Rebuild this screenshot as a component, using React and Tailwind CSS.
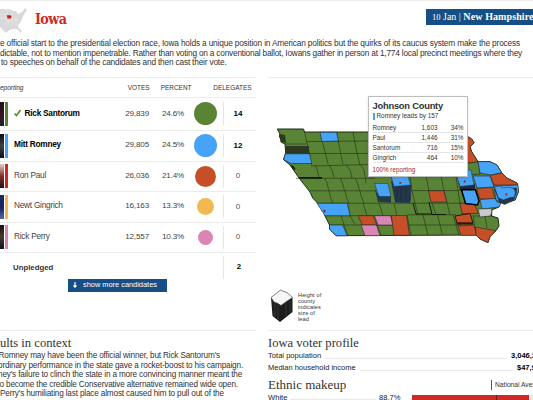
const G = '#5a8435';
const B = '#47a3f8';
const O = '#c64f28';
const P = '#da86b4';
const D = '#24384c';

const candidates = [
  { name: 'Rick Santorum', votes: '29,839', pct: '24.6%', del: '14', won: true, bold: true, h: 'h-[32.5px]', photo: 'from-[#15131c] via-[#3a1420] to-[#16203c]', bar: 'bg-[#5a8435]', dot: 'size-[23px] bg-[#5a8435]' },
  { name: 'Mitt Romney', votes: '29,805', pct: '24.5%', del: '12', bold: true, h: 'h-[31px]', photo: 'from-[#0b0d0f] via-[#3c4444] to-[#0c1014]', bar: 'bg-[#47a3f8]', dot: 'size-[23px] bg-[#47a3f8]' },
  { name: 'Ron Paul', votes: '26,036', pct: '21.4%', del: '0', h: 'h-[30px]', photo: 'from-[#d9d2c0] via-[#8a2a28] to-[#1c1415]', bar: 'bg-[#d42424]', dot: 'size-[21px] bg-[#c64f28]' },
  { name: 'Newt Gingrich', votes: '16,163', pct: '13.3%', del: '0', h: 'h-[31px]', photo: 'from-[#1c2a66] via-[#18235a] to-[#5a6aa0]', bar: 'bg-[#f0b952]', dot: 'size-[17px] bg-[#f0b952]' },
  { name: 'Rick Perry', votes: '12,557', pct: '10.3%', del: '0', h: 'h-[30px]', photo: 'from-[#14110f] via-[#4b3a2c] to-[#10131f]', bar: 'bg-[#da86b4]', dot: 'size-[15px] bg-[#da86b4]' },
];

function CandidateRow({ c }) {
  return (
    <div className={`flex items-center border-b border-[#ececec] ${c.h}`}>
      <div className={`h-[24px] w-[4px] bg-gradient-to-b ${c.photo}`} />
      <div className={`ml-px h-[24px] w-[3px] ${c.bar}`} />
      <div className={`-mt-[2px] ml-[6px] flex w-[96px] items-center whitespace-nowrap text-[8.3px] tracking-[-0.26px] ${c.bold ? 'font-bold text-black' : 'text-[#444]'}`}>
        {c.won && (
          <svg className="mr-[3px] h-[8px] w-[7.5px] shrink-0" viewBox="0 0 15 16">
            <path d="M1 9l4 4L13 2" fill="none" stroke="#4f8a2a" strokeWidth="3" />
          </svg>
        )}
        {c.name}
      </div>
      <div className="w-[39px] text-right text-[8.1px] tracking-[-0.15px] text-[#444]">{c.votes}</div>
      <div className="w-[35px] text-right text-[8.1px] tracking-[-0.2px] text-[#444]">{c.pct}</div>
      <div className="ml-[4px] flex w-[35px] justify-center">
        <div className={`rounded-full ${c.dot}`} />
      </div>
      <div className={`flex h-[23px] w-[29px] items-center justify-center border-l border-[#e6e6e6] text-[8px] ${c.bold ? 'font-bold text-black' : 'text-[#555]'}`}>{c.del}</div>
    </div>
  );
}

const outline =
  '277.3,129 303.5,129 304.5,132 466,132 467.7,136.7 471.7,139 474,142.7 470,147 471.7,151.7 478,161.7 490,161.7 497,165 501.7,172.7 506.7,178 517,183 518.5,191.5 515,200 500,203 499,207 491.7,210 491.7,216 498,218 499,226 496,230.7 490,236.5 488,242.5 480,239 476,235 336,235.7 329.5,229 329.5,225 325,216 322.7,210 317.5,203 312.7,198 310,192 305,185.7 299,178 293.5,170 290,165 283.5,159.5 285.7,152.7 285,144 281,142 280,134';

const areas = [
  [B, '320,132.3 336.5,132.3 338.5,141 322,141.5'],
  [B, '285.5,153.8 309.5,153.8 311.8,163.5 291,163.5 283.5,159.5'],
  [B, '317,203.3 347.3,203.3 350,215.7 325,215.7'],
  [B, '329.5,225 342.5,225 347.3,235.7 336,235.7 329.5,229'],
  [O, '358,215.7 373,215.7 377,225 362.5,225'],
  [P, '374.5,215.7 390.5,215.7 393,225 378,225'],
  [P, '361,225 376.5,225 380,235.7 365,235.7'],
  [O, '391.3,215.5 406.5,215.5 409.5,235.3 394,235.3'],
  [O, '452,132 466,132 467.7,136.7 471.7,139 474,142.7 470,147 471.7,151.7 478,161.7 461,164'],
  [G, '461,164 478,162 480,174 466,175'],
  [B, '478,161.7 490,161.7 497,165 501.7,172.7 491,175 480,173'],
  [O, '490,175.5 502,173 507,178 517,183 518,185 494,185'],
  [B, '473,176 490,176 494,187 477,188'],
  [B, '494,186 518,185 518.5,191.5 515,200 503,203 496,200'],
  [O, '428.5,190.7 443.5,190.7 447,202 431,202'],
  [O, '476.5,188.5 492,187.5 495,199 480,199'],
  [B, '480,199.5 495,198.5 497,202 501,203 499,207 482,209'],
  [O, '460,203.3 474,203.3 478.5,213.5 462,213.5'],
  ['#c9c9c9', '478,209 491.7,208.5 491.7,213 490,216 480,217'],
  [O, '458,226 474,225 476.5,235.3 461,235.3'],
  [O, '475.5,227 496,230.7 490,236.5 488,242.5 480,239 476,235'],
];

const lines = [
  'M285.5 144H306M306.5 141.5L370 141M307.5 153.5H370M311 166L370 164.5M296 178.3H375M310 190.8H376M317 203.2H462M325 215.7H392M329 225H461M410 190.6H462M407 214.8H456M474 216H492',
  'M304.5 132L309.5 153.5L311.5 165M336.5 132l4 20.5 2.5 12M353 132l4 21 3 12M322 141.5l3.500 12 2.500 10.500',
  'M315 165l2 4 2 9M329 165l3 5 2 8M346 165l4 5 2 8M361 165l3 5 2 13',
  'M325 178.300l2 5 2 7.500M340.500 178.300l2 5 2 7.500M355.500 178.300l2 5 2 7.500',
  'M329 190.800l1 5 3 7.500M345 190.800l1 5 3 7.500M360 190.800l1 5 3 7.500M347.500 203.200l2.500 12.500 5 9M363 203.200l4 12.500M379 203.200l4 12.500M394 203.200l3 12.500M341 215.700l3 9.300 4 10.700M377 225l4 10.700',
  'M410 176l2 15 3 12 3 12M426 176l3 15 3 12 4 12M441 176l3 15 3 12 3 12M456 176l2 15 2 12 3 12M407 215l4 20M423 215l5 20M437.500 215l5 20M453 215l6 20M473 215l3 20M485 216l2 12',
];

function IowaMap() {
  return (
    <svg className="block h-[206px] w-[265px]" viewBox="268 78 265 206">
      <polygon points={outline} fill={G} stroke="#1e2a18" strokeWidth="1" />
      {lines.map((d, i) => (
        <path key={i} d={d} fill="none" stroke="#203014" strokeWidth="0.6" />
      ))}
      {areas.map(([fill, pts], i) => (
        <polygon key={i} points={pts} fill={fill} stroke="#1e2a28" strokeWidth="0.6" />
      ))}
      {/* Raised counties: dark side walls below the coloured tops */}
      <path d="M285.500 146H309V153.700H285.700ZM279 134l6 1 1 8-4-1-3-5Z" fill="#2c3820" />
      <path d="M290 165l3.500 1 2 3-1 1ZM299 177H322V178.800H300Z" fill="#121a0c" />
      <path d="M374.500 188l3.500 14 13 .8V196l-13-1Z" fill={D} />
      <path d="M374.500 183.500H388L391 196.500H379Z" fill={B} stroke="#1e2a38" strokeWidth="0.500" />
      <path d="M391 181l4 21.500 15 .5 1-4V184Z" fill={D} />
      <path d="M391 176H408L410.500 185 394 186.500Z" fill={B} stroke="#1e2a38" strokeWidth="0.500" />
      <path d="M397 188v14M401 188v15M406 187v15" stroke="#14212f" strokeWidth="0.500" />
      <path d="M458 181l2 9 15-1V184Z" fill="#1d2b38" />
      <path d="M457 176L463 170H471L474 185 460 186.500Z" fill={B} stroke="#1e2a38" strokeWidth="0.500" />
      <path d="M494.500 189l5 13 5 2.500 9-4 3-8V188Z" fill={D} stroke="#14202c" strokeWidth="0.500" />
      <path d="M494.500 187l5-1 4 2 5-1 5 1.500 2 3.500-1 5-6 1-5 2-5-2Z" fill={B} stroke="#1e2a38" strokeWidth="0.500" />
      <path d="M461.500 189.800H475.500L479 201l-1.500 4-12-1.500Z" fill={B} stroke="#000" strokeWidth="1.500" />
      <path d="M455 216l15-2.500 3 9.500H457Z" fill={O} stroke="#19110c" strokeWidth="0.900" />
      <path d="M456.500 223.600H473" stroke="#3c150a" strokeWidth="2" />
      <path d="M413 203l3 11h16M429 202l3 12.500H446" fill="none" stroke="#10180a" strokeWidth="1" />
      <circle cx="324.500" cy="211" r="1.200" fill="#9b1c24" />
      <circle cx="400.300" cy="183" r="1.100" fill="#9b1c24" />
      <circle cx="464.700" cy="181.500" r="1.100" fill="#9b1c24" />
      <circle cx="506.300" cy="194.500" r="1.100" fill="#9b1c24" />
    </svg>
  );
}

const county = [
  ['Romney', '1,603', '34%'],
  ['Paul', '1,446', '31%'],
  ['Santorum', '716', '15%'],
  ['Gingrich', '464', '10%'],
];

function Tooltip() {
  return (
    <div className="absolute left-[100px] top-[18px] h-[81px] w-[100px] border border-[#bdbdbd] bg-white pl-[3.5px] pr-[3px] pt-[3px] text-[#333] shadow-sm">
      <div className="whitespace-nowrap text-[9.4px] font-bold leading-[11px] tracking-[-0.25px]">Johnson County</div>
      <div className="flex h-[10px] items-center whitespace-nowrap text-[6.4px]">
        <div className="mr-[2px] h-[7px] w-[2px] shrink-0 bg-[#47a3f8]" />
        Romney leads by 157
      </div>
      <div className="pt-[2px]">
        {county.map(([n, v, p]) => (
          <div key={n} className="flex h-[10.1px] items-center border-b border-[#e6e6e6] text-[6.4px]">
            <div className="w-[40px]">{n}</div>
            <div className="w-[25px] text-right">{v}</div>
            <div className="w-[26px] text-right">{p}</div>
          </div>
        ))}
      </div>
      <div className="mt-[3px] whitespace-nowrap text-[6.3px] leading-[8px] text-[#a01c28]">100% reporting</div>
    </div>
  );
}

function UsMap() {
  return (
    <svg className="h-[28px] w-[28px]" viewBox="0 0 28 28">
      <path d="M0 2L11 2.500 13 4 16 4 18 7 20 6 23 4 25 1 27 3 25 6 23 9 22 12 20 16 18 18 18 20 22 24 21 26 17 22 12 22 8 24 6 26 2 22 0 20Z" fill="#d9d9d9" />
      <path d="M0 7H6V14H12V19M7 3V7M0 11H6M12 6V13M16 9V19M8 18V14M12 13H20" fill="none" stroke="#efefef" strokeWidth="0.600" />
      <path d="M6.800 8.300H10.800L11.600 9.700 10.800 11.500H7.500Z" fill="#d0211c" />
    </svg>
  );
}

function HeightIcon() {
  return (
    <svg className="h-[34px] w-[24px]" viewBox="0 0 24 34">
      <path d="M1 8.500L2.500 27 10 33 22.500 23V8.500L11 16Z" fill="#1c1c1c" />
      <path d="M5 13v15M8 16v15M16 14v13M20 12v12" stroke="#4a4a4a" strokeWidth="0.600" />
      <path d="M1 8.500L10.500 1 14 2.500 17 3.500 22.500 8.500 17 12 11 16.500 8 14.500 4 13Z" fill="#f6f6f6" stroke="#333" strokeWidth="0.600" />
    </svg>
  );
}

function Heading({ size = 'text-[12.6px]', children }) {
  return <h2 className={`whitespace-nowrap font-['Liberation_Serif',serif] leading-[14px] text-[#333] ${size}`}>{children}</h2>;
}

export default function App() {
  return (
    <div className="flex h-[400px] w-[533px] flex-col overflow-hidden border-t border-[#ececec] bg-white font-['Liberation_Sans',Arial,sans-serif] text-[#333]">
      <header className="flex h-[38px] shrink-0 items-start">
        <div className="pt-[6px]"><UsMap /></div>
        <h1 className="ml-[7px] mt-[9px] w-[391px] font-['DejaVu_Serif_Condensed','DejaVu_Serif',serif] text-[14.2px] font-bold leading-[18px] tracking-[-0.6px] text-[#cf2a25]">Iowa</h1>
        <div className="mt-[8px] h-[16px] w-[107px] shrink-0 overflow-hidden whitespace-nowrap bg-[#164f86] pl-[6px] font-['Liberation_Serif',serif] text-[10px] leading-[16px] text-white">
          <span className="text-[8.5px]">10</span> Jan | <span className="font-bold tracking-[0.1px]">New Hampshire</span>
        </div>
      </header>
      <div className="h-[38px] shrink-0 whitespace-nowrap text-[8.3px] leading-[9.6px]">
        <p className="tracking-[-0.165px]">e official start to the presidential election race, Iowa holds a unique position in American politics but the quirks of its caucus system make the process</p>
        <p className="tracking-[-0.205px]">dictable, not to mention impenetrable. Rather than voting on a conventional ballot, Iowans gather in person at 1,774 local precinct meetings where they</p>
        <p className="pl-[1px] tracking-[-0.185px]">to speeches on behalf of the candidates and then cast their vote.</p>
      </div>
      <div className="flex h-[253px] shrink-0 gap-[12px]">
        <section className="w-[256px] shrink-0 border-t border-[#ececec]">
          <div className="flex h-[20px] items-center border-b border-[#ececec] text-[6.45px]">
            <div className="w-[110px] text-[6.5px] italic">eporting</div>
            <div className="w-[39.5px] text-right">VOTES</div>
            <div className="w-[42px] text-right">PERCENT</div>
            <div className="w-[60px] text-right">DELEGATES</div>
          </div>
          {candidates.map((c) => <CandidateRow key={c.name} c={c} />)}
          <div className="flex h-[26px] items-end text-[7.8px] font-bold">
            <div className="mb-[5px] w-[210px] pl-[13px]">Unpledged</div>
            <div className="ml-[13px] flex h-[23px] w-[31px] items-center justify-center border-l border-[#e6e6e6] text-black">2</div>
          </div>
          <button className="ml-[68px] flex h-[13px] w-[99px] items-center whitespace-nowrap bg-[#164f86] pl-[5px] text-[7.4px] text-white">
            <svg className="mr-[6px] h-[6px] w-[4px]" viewBox="0 0 4 6"><path d="M2 0V5M.500 3.500L2 5.200 3.500 3.500" fill="none" stroke="white" strokeWidth="1.200" /></svg>
            show more candidates
          </button>
        </section>
        <section className="relative w-[265px] shrink-0 border-t border-[#ececec]">
          <IowaMap />
          <Tooltip />
          <div className="flex pl-[2px] pt-[5px]">
            <HeightIcon />
            <p className="ml-[4px] mt-[3px] w-[40px] text-[5.6px] leading-[6px] tracking-[0.1px]">Height of<br />county<br />indicates<br />size of<br />lead</p>
          </div>
        </section>
      </div>
      <div className="flex h-[70px] shrink-0 gap-[12px]">
        <section className="w-[256px] shrink-0 border-t border-[#ececec] pt-[5px]">
          <Heading>ults in context</Heading>
          <div className="mt-[1px] whitespace-nowrap text-[8.2px] leading-[9.6px] tracking-[-0.16px]">
            <p className="-ml-[1.5px]">Romney may have been the official winner, but Rick Santorum's</p>
            <p className="-ml-[2px]">ordinary performance in the state gave a rocket-boost to his campaign.</p>
            <p className="-ml-[2px]">ney's failure to clinch the state in a more convincing manner meant the</p>
            <p className="-ml-[0.5px]">o become the credible Conservative alternative remained wide open.</p>
            <p>Perry's humiliating last place almost caused him to pull out of the</p>
          </div>
        </section>
        <section className="w-[265px] shrink-0 border-t border-[#ececec] pt-[5px]">
          <Heading>Iowa voter profile</Heading>
          <div className="flex h-[12px] items-center whitespace-nowrap text-[7.6px] text-[#222]">
            Total population
            <div className="mx-[4px] mt-[4px] h-px flex-1 bg-[#e8e8e8]" />
            <div className="w-[22px] text-[7.5px] font-bold text-black">3,046,355</div>
          </div>
          <div className="flex h-[12px] items-center whitespace-nowrap text-[7.5px] text-[#222]">
            Median household income
            <div className="mx-[4px] mt-[4px] h-px flex-1 bg-[#e8e8e8]" />
            <div className="w-[16px] text-[7.5px] font-bold text-black">$47,961</div>
          </div>
          <div className="flex items-center justify-between pt-[4px]">
            <Heading size="text-[13px]">Ethnic makeup</Heading>
            <div className="flex h-[10px] w-[42px] items-center overflow-hidden whitespace-nowrap border-l border-[#555] pl-[3px] text-[6.7px]">National Average</div>
          </div>
          <div className="flex h-[11px] items-center whitespace-nowrap text-[7.6px] text-[#222]">
            White
            <div className="mx-[3px] mt-[4px] h-px flex-1 bg-[#e8e8e8]" />
            <div className="w-[33px]">88.7%</div>
            <div className="flex h-[6px] w-[121px] bg-[#e9e9e9]">
              <div className="w-[84px] bg-[#cf2a25]" />
              <div className="w-px bg-[#7a1a16]" />
              <div className="w-[32px] bg-[#cf2a25]" />
            </div>
          </div>
        </section>
      </div>
    </div>
  );
}
